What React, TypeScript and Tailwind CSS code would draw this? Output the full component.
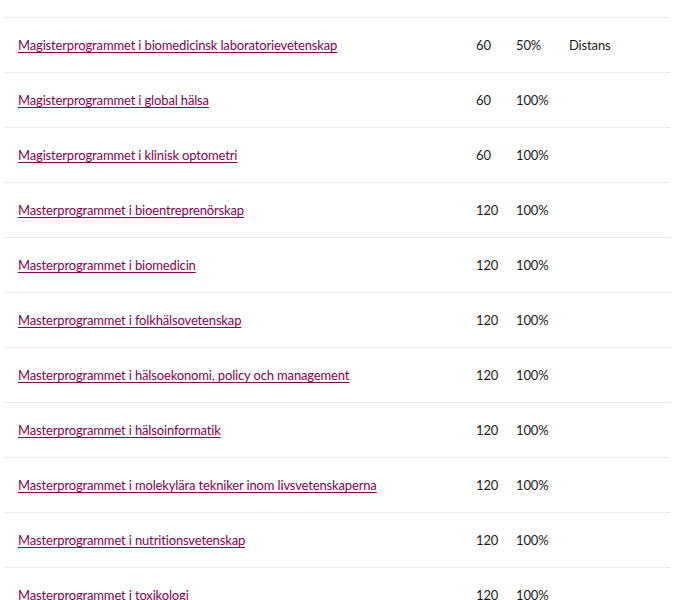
const rows = [
  { name: 'Magisterprogrammet i biomedicinsk laboratorievetenskap', hp: '60', pace: '50%', form: 'Distans' },
  { name: 'Magisterprogrammet i global hälsa', hp: '60', pace: '100%', form: '' },
  { name: 'Magisterprogrammet i klinisk optometri', hp: '60', pace: '100%', form: '' },
  { name: 'Masterprogrammet i bioentreprenörskap', hp: '120', pace: '100%', form: '' },
  { name: 'Masterprogrammet i biomedicin', hp: '120', pace: '100%', form: '' },
  { name: 'Masterprogrammet i folkhälsovetenskap', hp: '120', pace: '100%', form: '' },
  { name: 'Masterprogrammet i hälsoekonomi, policy och management', hp: '120', pace: '100%', form: '' },
  { name: 'Masterprogrammet i hälsoinformatik', hp: '120', pace: '100%', form: '' },
  { name: 'Masterprogrammet i molekylära tekniker inom livsvetenskaperna', hp: '120', pace: '100%', form: '' },
  { name: 'Masterprogrammet i nutritionsvetenskap', hp: '120', pace: '100%', form: '' },
  { name: 'Masterprogrammet i toxikologi', hp: '120', pace: '100%', form: '' },
]

export default function App() {
  return (
    <div className="h-[600px] overflow-hidden bg-white px-1 font-['Lato',sans-serif] text-[13px] tracking-[-0.15px] text-[#1a1a1a]">
      <table className="mt-[17px] w-[666px] table-fixed border-collapse border-t border-[#ebebeb]">
        <colgroup>
          <col className="w-[458px]" />
          <col className="w-[40px]" />
          <col className="w-[53px]" />
          <col className="w-[115px]" />
        </colgroup>
        <tbody>
          {rows.map((r) => (
            <tr key={r.name} className="h-[55px] border-b border-[#ebebeb]">
              <td className="pt-[2px] pl-[14px] align-middle">
                <a href="#" className="text-[#870052] underline underline-offset-2">
                  {r.name}
                </a>
              </td>
              <td className="pt-[2px] pl-[14px]">{r.hp}</td>
              <td className="pt-[2px] pl-[14px]">{r.pace}</td>
              <td className="pt-[2px] pl-[14px]">{r.form}</td>
            </tr>
          ))}
        </tbody>
      </table>
    </div>
  )
}
